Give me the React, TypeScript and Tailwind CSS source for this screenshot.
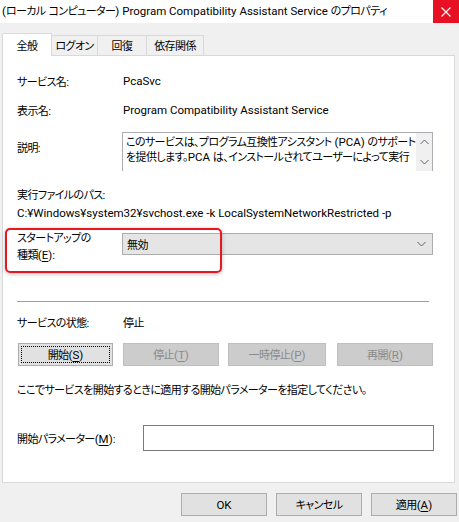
import React from "react"

// Latin runs use Roboto, Japanese runs use Noto Sans CJK JP (proportional kana, tightened)
const CJK = /([\u3000-\u30ff\u3400-\u9fff\uff00-\uffef]+)/

function T({ s }: { s: string }) {
    return (
        <span>
            {s.split(CJK).map((part, i) =>
                CJK.test(part) ? (
                    <span key={i} className="[font-family:'Noto_Sans_CJK_JP',sans-serif] [font-feature-settings:'palt'] text-[11px] tracking-[-0.6px]">
                        {part}
                    </span>
                ) : (
                    <span key={i}>{part}</span>
                )
            )}
        </span>
    )
}

function Key({ k }: { k: string }) {
    return (
        <>
            (<span className="underline underline-offset-2">{k}</span>)
        </>
    )
}

function Btn({
    children,
    disabled,
    focused,
    className = "",
}: {
    children: React.ReactNode
    disabled?: boolean
    focused?: boolean
    className?: string
}) {
    return (
        <div
            className={`h-[23px] flex items-center justify-center border ${
                disabled
                    ? "bg-[#cccccc] border-[#bfbfbf] text-[#8a8a8a]"
                    : "bg-[#e1e1e1] border-[#adadad] text-black"
            } ${className}`}
        >
            {focused ? (
                <div className="w-[calc(100%-4px)] h-[calc(100%-4px)] border border-dotted border-black flex items-center justify-center">
                    {children}
                </div>
            ) : (
                children
            )}
        </div>
    )
}

function Chevron({ up }: { up?: boolean }) {
    return (
        <svg width="9" height="6" viewBox="0 0 9 6" className="block">
            <polyline
                points={up ? "0.5,5 4.5,1 8.5,5" : "0.5,1 4.5,5 8.5,1"}
                fill="none"
                stroke="#606060"
                strokeWidth="1"
            />
        </svg>
    )
}

export default function App() {
    return (
        <div className="w-[459px] h-[522px] bg-[#f0f0f0] flex flex-col text-black text-[11.5px] leading-[16px] [font-family:Roboto,'Noto_Sans_CJK_JP',sans-serif]">
            {/* Title bar */}
            <div className="h-[23px] bg-white flex items-center justify-between">
                <div className="pl-[2px] pb-[3px] whitespace-nowrap">
                    <T s="(ローカル コンピューター) Program Compatibility Assistant Service のプロパティ" />
                </div>
                <div className="w-[26px] h-[23px] bg-[#e81123] flex items-center justify-center">
                    <svg width="10" height="10" viewBox="0 0 10 10">
                        <path d="M0.5 0.5 L9.5 9.5 M9.5 0.5 L0.5 9.5" stroke="white" strokeWidth="1.1" />
                    </svg>
                </div>
            </div>

            {/* Tabs */}
            <div className="flex items-end pl-[2px] mt-[9px] h-[23px] relative z-10">
                <div className="w-[50px] h-[23px] bg-white border border-b-0 border-[#d9d9d9] flex items-start justify-center pt-[3px] -mb-px pb-px">
                    <T s="全般" />
                </div>
                <div className="w-[46px] h-[20px] bg-[#f0f0f0] border border-l-0 border-b-0 border-[#d9d9d9] flex items-center justify-center">
                    <T s="ログオン" />
                </div>
                <div className="w-[49px] h-[20px] bg-[#f0f0f0] border border-l-0 border-b-0 border-[#d9d9d9] flex items-center justify-center">
                    <T s="回復" />
                </div>
                <div className="w-[57px] h-[20px] bg-[#f0f0f0] border border-l-0 border-b-0 border-[#d9d9d9] flex items-center justify-center">
                    <T s="依存関係" />
                </div>
            </div>

            {/* Panel */}
            <div className="ml-[2px] w-[453px] h-[428px] bg-white border border-[#d9d9d9] pl-[14px] flex flex-col">
                <div className="mt-[17px] flex h-[16px]">
                    <div className="w-[106px]"><T s="サービス名:" /></div>
                    <div>PcaSvc</div>
                </div>
                <div className="mt-[13px] flex h-[16px]">
                    <div className="w-[106px]"><T s="表示名:" /></div>
                    <div>Program Compatibility Assistant Service</div>
                </div>
                <div className="mt-[14px] flex h-[39px]">
                    <div className="w-[105px] pt-[7px]"><T s="説明:" /></div>
                    <div className="w-[311px] h-[39px] border border-b-0 border-[#abadb3] flex">
                        <div className="flex-1 pl-[3px] pt-[1px] overflow-hidden">
                            <div className="whitespace-nowrap h-[15px] leading-[15px]"><T s="このサービスは、プログラム互換性アシスタント (PCA) のサポート" /></div>
                            <div className="whitespace-nowrap h-[15px] leading-[15px]"><T s="を提供します。PCA は、インストールされてユーザーによって実行" /></div>
                        </div>
                        <div className="w-[16px] bg-[#f0f0f0] flex flex-col items-center justify-between py-[6px]">
                            <Chevron up />
                            <Chevron />
                        </div>
                    </div>
                </div>
                <div className="mt-[15px] h-[16px]"><T s="実行ファイルのパス:" /></div>
                <div className="mt-[3px] h-[16px] whitespace-nowrap">
                    C:¥Windows¥system32¥svchost.exe -k LocalSystemNetworkRestricted -p
                </div>

                {/* Startup type */}
                <div className="mt-[8px] flex relative h-[34px]">
                    <div className="w-[105px]">
                        <div className="h-[17px] leading-[17px]"><T s="スタートアップの" /></div>
                        <div className="h-[17px] leading-[17px]">
                            <T s="種類" /><Key k="E" />:
                        </div>
                    </div>
                    <div className="mt-[4px] w-[311px] h-[22px] bg-[#e5e5e5] border border-[#adadad] flex items-center justify-between pl-[4px] pr-[6px]">
                        <T s="無効" />
                        <Chevron />
                    </div>
                    <div className="absolute left-[-12px] top-[-1px] w-[217px] h-[45px] rounded-[5px] border-2 border-[#e8161f] shadow-[0_1px_4px_rgba(0,0,0,0.25)]" />
                </div>

                <div className="mt-[38px] w-[412px] h-px bg-[#a0a0a0]" />

                <div className="mt-[12px] flex h-[16px]">
                    <div className="w-[106px]"><T s="サービスの状態:" /></div>
                    <div><T s="停止" /></div>
                </div>

                <div className="mt-[13px] flex">
                    <Btn focused className="w-[95px] ml-[1px]">
                        <span>
                            <T s="開始" /><Key k="S" />
                        </span>
                    </Btn>
                    <Btn disabled className="w-[96px] ml-[10px]">
                        <span>
                            <T s="停止" /><Key k="T" />
                        </span>
                    </Btn>
                    <Btn disabled className="w-[98px] ml-[9px]">
                        <span>
                            <T s="一時停止" /><Key k="P" />
                        </span>
                    </Btn>
                    <Btn disabled className="w-[96px] ml-[11px]">
                        <span>
                            <T s="再開" /><Key k="R" />
                        </span>
                    </Btn>
                </div>

                <div className="mt-[15px] h-[16px] whitespace-nowrap">
                    <T s="ここでサービスを開始するときに適用する開始パラメーターを指定してください。" />
                </div>

                <div className="mt-[28px] flex items-center h-[26px]">
                    <div className="w-[126px]">
                        <T s="開始パラメーター" /><Key k="M" />:
                    </div>
                    <div className="w-[291px] h-[26px] border border-[#7a7a7a] bg-white" />
                </div>
            </div>

            {/* Dialog buttons */}
            <div className="mt-[10px] flex justify-end pr-[2px] gap-[9px]">
                <Btn className="w-[86px]">OK</Btn>
                <Btn className="w-[86px]"><T s="キャンセル" /></Btn>
                <Btn className="w-[86px]">
                    <span>
                        <T s="適用" /><Key k="A" />
                    </span>
                </Btn>
            </div>
        </div>
    )
}
